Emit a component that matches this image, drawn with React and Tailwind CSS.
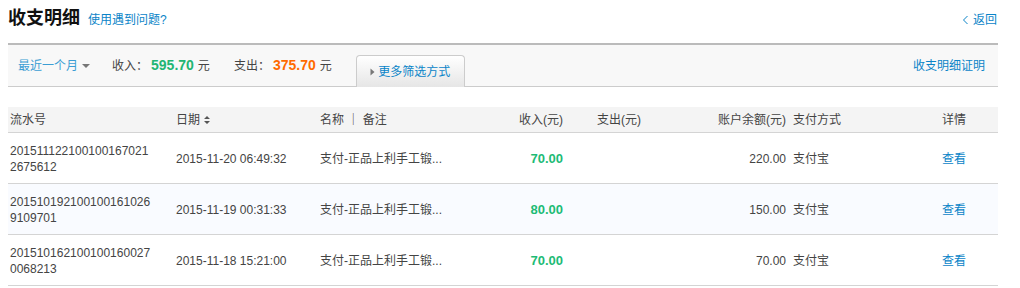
import React from "react";

const rows = [
  { id1: "201511122100100167021", id2: "2675612", date: "2015-11-20 06:49:32", income: "70.00", balance: "220.00", bg: "bg-white" },
  { id1: "201510192100100161026", id2: "9109701", date: "2015-11-19 00:31:33", income: "80.00", balance: "150.00", bg: "bg-[#f9fbff]" },
  { id1: "201510162100100160027", id2: "0068213", date: "2015-11-18 15:21:00", income: "70.00", balance: "70.00", bg: "bg-white" },
];

export default function App() {
  return (
    <div className="w-[1020px] h-[288px] bg-white text-[12px] text-[#444] overflow-hidden" style={{ fontFamily: '"Liberation Sans", "Noto Sans CJK SC", sans-serif' }}>
      <div className="ml-[8px] w-[990px]">
        {/* title */}
        <div className="flex items-end justify-between h-[43px] pb-[13px]">
          <div className="flex items-end">
            <span className="text-[18px] font-bold text-[#111] leading-[24px]">收支明细</span>
            <a className="ml-[8px] text-[12px] text-[#0a84c8] leading-[20px]">使用遇到问题?</a>
          </div>
          <a className="text-[12px] text-[#0a84c8] leading-[20px] mr-[1px] flex items-center">
            <svg width="8" height="10" viewBox="0 0 8 10" className="mr-[3px]"><path d="M5.5 1 L1.5 5 L5.5 9" fill="none" stroke="#0a84c8" strokeWidth="1" /></svg>
            返回
          </a>
        </div>
        {/* filter bar */}
        <div className="border-t-2 border-[#bbbbbb] border-b border-b-[#cccccc] bg-[#f8f8f8] h-[44px] flex items-end justify-between">
          <div className="flex items-end h-full">
            <div className="flex items-center h-full pl-[10px]">
              <span className="text-[#3c9ed4]">最近一个月</span>
              <svg width="10" height="6" viewBox="0 0 10 6" className="ml-[3px]"><path d="M1 1 L9 1 L5 5 Z" fill="#777" /></svg>
              <span className="ml-[21px] text-[#444]">收入：</span>
              <span className="ml-[3px] text-[14px] font-bold text-[#22b573]">595.70</span>
              <span className="ml-[4px] text-[#444]">元</span>
              <span className="ml-[24px] text-[#444]">支出：</span>
              <span className="ml-[3px] text-[14px] font-bold text-[#ff6a00]">375.70</span>
              <span className="ml-[4px] text-[#444]">元</span>
            </div>
            <div className="ml-[24px] mb-[-1px] w-[109px] h-[32px] border border-b-0 border-[#cccccc] rounded-t-[4px] bg-gradient-to-b from-white to-[#e6e6e6] flex items-center justify-center">
              <svg width="5" height="8" viewBox="0 0 5 8" className="mr-[3px]"><path d="M0.5 0.5 L4.5 4 L0.5 7.5 Z" fill="#777" /></svg>
              <span className="text-[#0a84c8]">更多筛选方式</span>
            </div>
          </div>
          <a className="self-center pr-[13px] text-[#0a84c8]">收支明细证明</a>
        </div>
        {/* table */}
        <div className="mt-[20px]">
          <div className="flex items-center h-[26px] bg-[#f4f4f4] border-b border-[#d4d4d4] text-[#444]">
            <div className="w-[168px] pl-[2px]">流水号</div>
            <div className="w-[144px] flex items-center">
              日期
              <svg width="8" height="10" viewBox="0 0 8 10" className="ml-[3px]"><path d="M1 4 L4 1 L7 4 Z M1 6 L4 9 L7 6 Z" fill="#555" /></svg>
            </div>
            <div className="w-[152px] whitespace-pre">名称 ｜ 备注</div>
            <div className="w-[91px] text-right">收入(元)</div>
            <div className="w-[78px] text-right">支出(元)</div>
            <div className="w-[145px] text-right">账户余额(元)</div>
            <div className="w-[134px] pl-[7px]">支付方式</div>
            <div className="flex-1 pl-[22px]">详情</div>
          </div>
          {rows.map((r, i) => (
            <div key={i} className={`flex items-center h-[51px] border-b border-[#d4d4d4] ${r.bg}`}>
              <div className="w-[168px] pl-[2px] leading-[16px] pt-[1px]">
                <div>{r.id1}</div>
                <div>{r.id2}</div>
              </div>
              <div className="w-[144px] pt-[2px]">{r.date}</div>
              <div className="w-[152px] pt-[2px]">支付-正品上利手工锻...</div>
              <div className="w-[91px] text-right text-[13px] font-bold text-[#1dbb75] pt-[2px]">{r.income}</div>
              <div className="w-[78px]"></div>
              <div className="w-[145px] text-right pt-[2px]">{r.balance}</div>
              <div className="w-[134px] pl-[7px] pt-[2px]">支付宝</div>
              <div className="flex-1 pl-[22px] text-[#0a84c8] pt-[2px]">查看</div>
            </div>
          ))}
        </div>
      </div>
    </div>
  );
}
